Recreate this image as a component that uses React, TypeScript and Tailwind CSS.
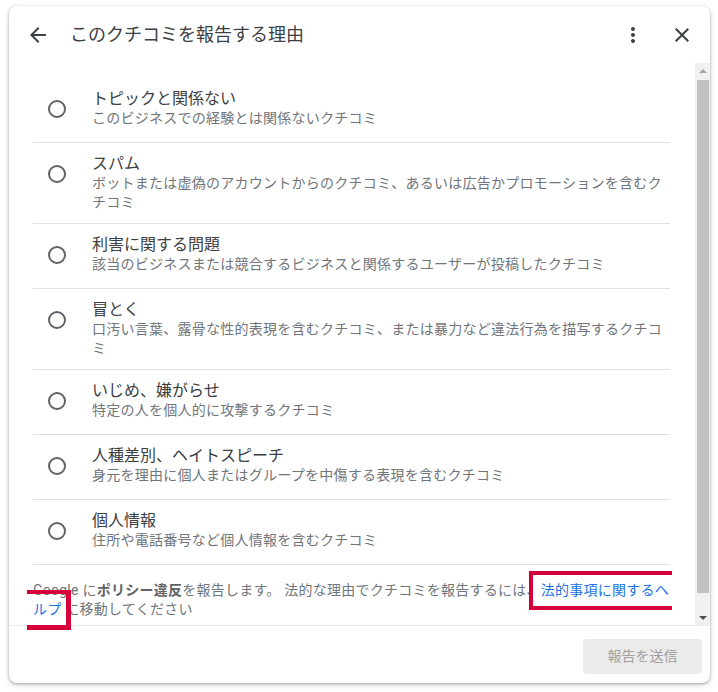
import React from "react";

const items = [
  ["トピックと関係ない", "このビジネスでの経験とは関係ないクチコミ"],
  ["スパム", "ボットまたは虚偽のアカウントからのクチコミ、あるいは広告かプロモーションを含むクチコミ"],
  ["利害に関する問題", "該当のビジネスまたは競合するビジネスと関係するユーザーが投稿したクチコミ"],
  ["冒とく", "口汚い言葉、露骨な性的表現を含むクチコミ、または暴力など違法行為を描写するクチコミ"],
  ["いじめ、嫌がらせ", "特定の人を個人的に攻撃するクチコミ"],
  ["人種差別、ヘイトスピーチ", "身元を理由に個人またはグループを中傷する表現を含むクチコミ"],
  ["個人情報", "住所や電話番号など個人情報を含むクチコミ"],
];

const font = { fontFamily: 'Roboto, "Noto Sans CJK JP", sans-serif' };

export default function App() {
  return (
    <div className="relative w-[718px] h-[692px] bg-white pt-[6px] pl-[9px]" style={font}>
      <div className="w-[701px] h-[677px] bg-white rounded-[8px] shadow-[0_1px_3px_rgba(0,0,0,0.3),0_2px_6px_rgba(0,0,0,0.12)] flex flex-col overflow-hidden">
        {/* header */}
        <div className="h-[57px] flex items-center pl-[17px] pr-[16px] shrink-0">
          <svg width="24" height="24" viewBox="0 0 24 24" fill="#3c4043">
            <path d="M20 11H7.83l5.59-5.59L12 4l-8 8 8 8 1.41-1.41L7.83 13H20v-2z" />
          </svg>
          <div className="ml-[20px] text-[18px] leading-[24px] text-[#3c4043] flex-1">このクチコミを報告する理由</div>
          <svg width="24" height="24" viewBox="0 0 24 24" fill="#3c4043">
            <path d="M12 8c1.1 0 2-.9 2-2s-.9-2-2-2-2 .9-2 2 .9 2 2 2zm0 2c-1.1 0-2 .9-2 2s.9 2 2 2 2-.9 2-2-.9-2-2-2zm0 6c-1.1 0-2 .9-2 2s.9 2 2 2 2-.9 2-2-.9-2-2-2z" />
          </svg>
          <svg className="ml-[25px]" width="24" height="24" viewBox="0 0 24 24" fill="#3c4043">
            <path d="M19 6.41L17.59 5 12 10.59 6.41 5 5 6.41 10.59 12 5 17.59 6.41 19 12 13.41 17.59 19 19 17.59 13.41 12z" />
          </svg>
        </div>
        {/* scroll area */}
        <div className="h-[562px] flex shrink-0">
          <div className="flex-1 overflow-hidden pl-[24px] pr-[25px] pt-[15px]">
            <ul>
              {items.map(([t, d]) => (
                <li key={t} className="min-h-[65px] border-b border-[#e0e0e0] flex items-start pt-[10px] pb-[11px] pl-[15px]">
                  <div className="mt-[12px] w-[18px] h-[18px] rounded-full border-2 border-[#5f6368] shrink-0" />
                  <div className="ml-[26px] flex-1">
                    <div className="text-[16px] leading-[21px] text-[#3c4043]">{t}</div>
                    <div className="text-[14px] leading-[19px] tracking-[0.25px] text-[#70757a]">{d}</div>
                  </div>
                </li>
              ))}
            </ul>
            <p className="pt-[16px] text-[14px] leading-[19px] tracking-[0.25px] text-[#70757a]">
              Google に<b className="font-bold text-[#5f6368]">ポリシー違反</b>を報告します。 法的な理由でクチコミを報告するには、<span className="text-[#1a73e8]">法的事項に関するヘルプ</span> に移動してください
            </p>
          </div>
          {/* scrollbar */}
          <div className="w-[15px] bg-[#f1f1f1] flex flex-col">
            <div className="h-[15px] flex items-center justify-center">
              <div className="w-0 h-0 border-l-[4px] border-r-[4px] border-b-[4px] border-l-transparent border-r-transparent border-b-[#a3a3a3]" />
            </div>
            <div className="mt-[2px] mx-[1.5px] h-[513px] bg-[#c1c1c1]" />
            <div className="flex-1" />
            <div className="h-[15px] flex items-center justify-center">
              <div className="w-0 h-0 border-l-[4px] border-r-[4px] border-t-[4px] border-l-transparent border-r-transparent border-t-[#505050]" />
            </div>
          </div>
        </div>
        {/* footer */}
        <div className="flex-1 border-t border-[#e8eaed] flex justify-end items-start pt-[13px] pr-[8px]">
          <div className="w-[119px] h-[35px] rounded-[4px] bg-[#ebebeb] flex items-center justify-center text-[14px] text-[#a0a0a0]">
            報告を送信
          </div>
        </div>
      </div>
      {/* annotation boxes */}
      <div className="absolute left-[529px] top-[571px] w-[143px] h-[39px] border-t-[4px] border-l-[4px] border-b-[4px] border-[#d5003b]" />
      <div className="absolute left-[27px] top-[590px] w-[44px] h-[40px] border-t-[4px] border-r-[5px] border-b-[5px] border-[#d5003b]" />
    </div>
  );
}
